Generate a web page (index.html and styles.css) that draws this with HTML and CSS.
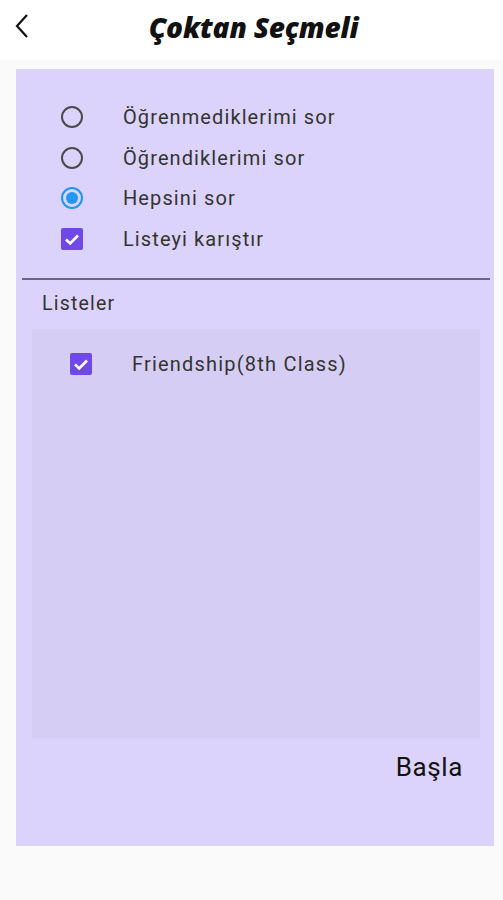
FILE: index.html
```html
<!DOCTYPE html>
<html lang="tr">
<head>
<meta charset="utf-8">
<link rel="stylesheet" href="styles.css">
</head>
<body>
<header class="appbar">
  <button class="back" aria-label="Geri">
    <svg width="16" height="26" viewBox="0 0 16 26"><path d="M13 2 L3 13 L13 24" fill="none" stroke="#111" stroke-width="2.2"/></svg>
  </button>
  <h1 class="title">Çoktan Seçmeli</h1>
</header>
<main class="page">
  <section class="panel">
    <div class="options">
      <label class="opt"><span class="radio"></span><span class="opt-text">Öğrenmediklerimi sor</span></label>
      <label class="opt"><span class="radio"></span><span class="opt-text">Öğrendiklerimi sor</span></label>
      <label class="opt"><span class="radio on"></span><span class="opt-text">Hepsini sor</span></label>
      <label class="opt"><span class="check"><svg width="22" height="22" viewBox="0 0 22 22"><path d="M5 11.5 L9.2 15.5 L17 7.5" fill="none" stroke="#fff" stroke-width="2.6"/></svg></span><span class="opt-text">Listeyi karıştır</span></label>
    </div>
    <hr class="divider">
    <div class="lists-label">Listeler</div>
    <div class="lists">
      <label class="list-item"><span class="check"><svg width="22" height="22" viewBox="0 0 22 22"><path d="M5 11.5 L9.2 15.5 L17 7.5" fill="none" stroke="#fff" stroke-width="2.6"/></svg></span><span class="list-text">Friendship(8th Class)</span></label>
    </div>
    <div class="actions"><button class="start">Başla</button></div>
  </section>
</main>
</body>
</html>
```
FILE: styles.css
```css
* { box-sizing: border-box; }
html, body { margin: 0; padding: 0; }
body {
  width: 503px;
  height: 900px;
  background: #fafafa;
  font-family: Roboto, "Liberation Sans", sans-serif;
  color: #222;
}
.appbar {
  height: 60px;
  background: #fff;
  display: flex;
  align-items: center;
  justify-content: center;
  position: relative;
  padding-bottom: 6px;
}
.back {
  position: absolute;
  left: 13px;
  top: 13px;
  border: 0;
  background: none;
  padding: 0;
  width: 18px;
  height: 28px;
}
.title {
  margin: 0 0 0 4px;
  font-family: "Open Sans", sans-serif;
  font-style: italic;
  font-weight: 800;
  font-size: 28px;
  letter-spacing: -0.2px;
  color: #111;
}
.page {
  padding: 9px 9px 0 16px;
}
.panel {
  background: #dcd3fc;
  height: 777px;
  display: flex;
  flex-direction: column;
  padding-top: 28px;
}
.options {
  display: flex;
  flex-direction: column;
  padding-left: 45px;
}
.opt {
  display: flex;
  align-items: center;
  height: 40.5px;
}
.radio {
  width: 22px;
  height: 22px;
  border: 2px solid #4a4a4a;
  border-radius: 50%;
  flex: none;
  position: relative;
}
.radio.on { border-color: #2196f3; }
.radio.on::after {
  content: "";
  position: absolute;
  left: 3px; top: 3px;
  width: 12px; height: 12px;
  border-radius: 50%;
  background: #2196f3;
}
.check {
  width: 22px;
  height: 22px;
  background: #7048e8;
  border-radius: 2px;
  flex: none;
  display: block;
}
.check svg { display: block; }
.opt-text {
  margin-left: 40px;
  font-size: 20px;
  letter-spacing: 1.1px;
  color: #333;
}
.divider {
  margin: 19px 4px 0 6px;
  border: 0;
  height: 2px;
  background: #6b6480;
}
.lists-label {
  margin: 12px 0 0 26px;
  font-size: 19.5px;
  letter-spacing: 1.2px;
  color: #333;
}
.lists {
  margin: 14px 14px 0 16px;
  height: 409px;
  background: #d6cdf4;
  padding: 23px 0 0 38px;
}
.list-item { display: flex; align-items: center; }
.list-text {
  margin-left: 40px;
  font-size: 20px;
  letter-spacing: 1.2px;
  color: #333;
}
.actions {
  display: flex;
  justify-content: flex-end;
  padding: 14px 31px 0 0;
}
.start {
  border: 0;
  background: none;
  padding: 0;
  font-family: Roboto, sans-serif;
  font-size: 26px;
  letter-spacing: 0.6px;
  color: #111;
}
```
